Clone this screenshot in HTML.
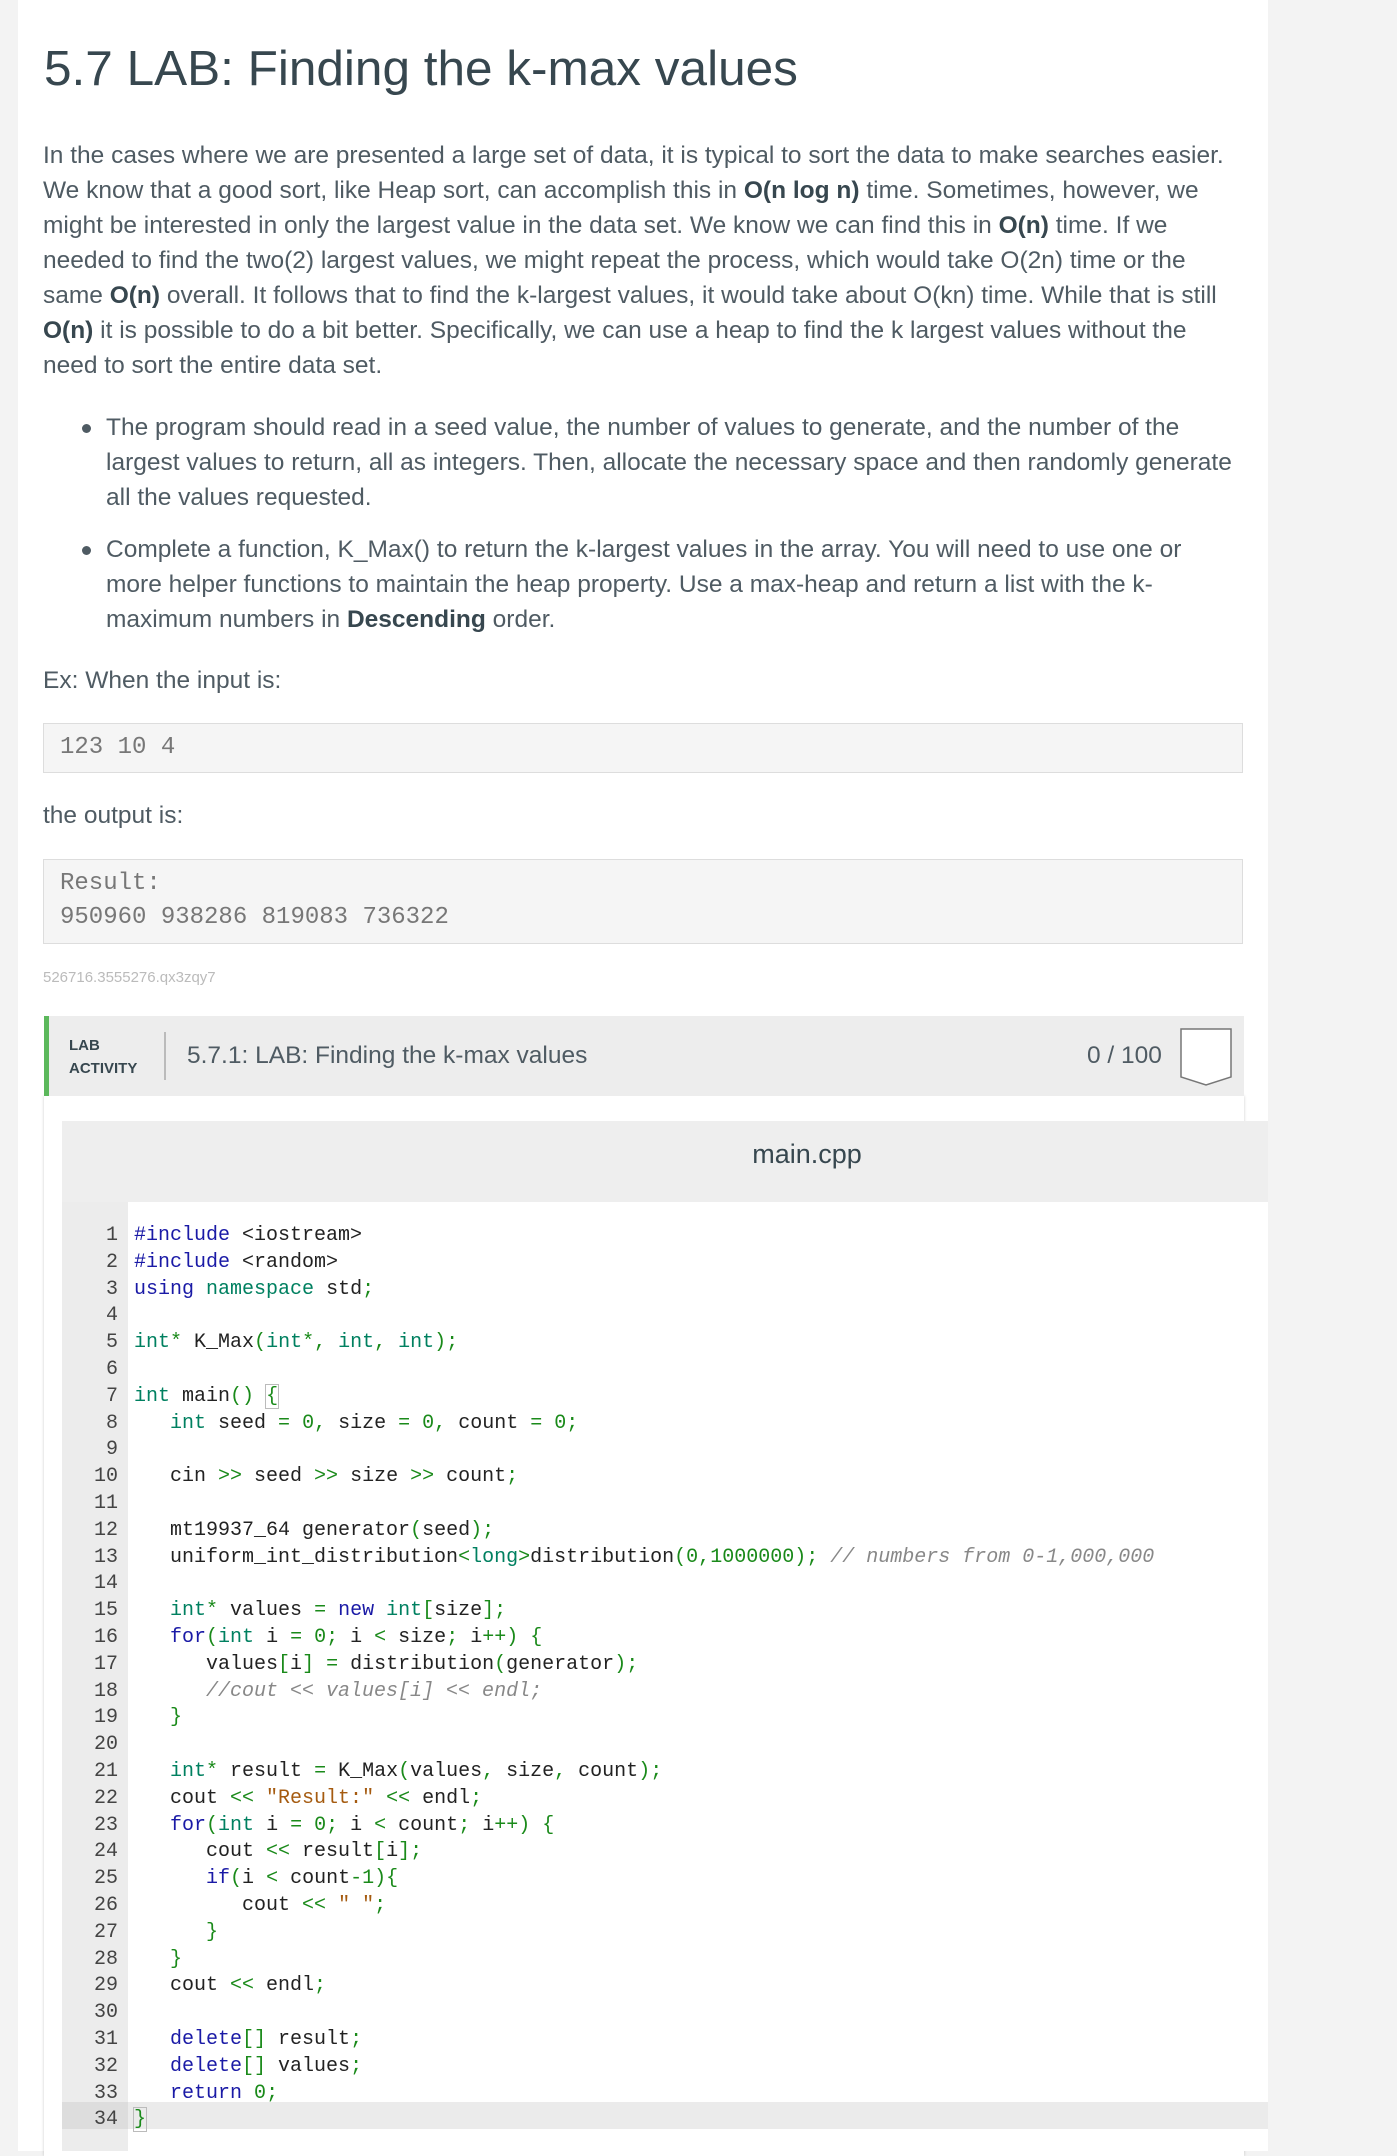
<!DOCTYPE html>
<html><head><meta charset="utf-8"><style>
*{margin:0;padding:0;box-sizing:border-box}
body{width:1397px;height:2151px;background:#f3f3f3;position:relative;overflow:hidden;font-family:"Liberation Sans",sans-serif;color:#4f5b63}
.a{position:absolute;white-space:nowrap}
#page{position:absolute;left:18px;top:0;width:1250px;height:2151px;background:#fff}
h1{position:absolute;left:44px;top:40px;font-size:49.5px;font-weight:normal;color:#37474f;white-space:nowrap}
.p{position:absolute;left:43px;font-size:24.5px;line-height:35px;white-space:nowrap}
b{color:#37474f}
.dot{position:absolute;width:9px;height:9px;border-radius:50%;background:#4f5b63}
.box{position:absolute;left:43px;width:1200px;background:#f5f5f5;border:1px solid #ddd;font-family:"Liberation Mono",monospace;font-size:24px;color:#777;padding-left:16px}
.code{position:absolute;left:0;font-family:"Liberation Mono",monospace;font-size:20px;line-height:26.8px;white-space:pre;color:#222}
.ln{position:absolute;left:62px;width:56px;text-align:right;font-family:"Liberation Mono",monospace;font-size:20px;line-height:26.8px;color:#444}
.k{color:#1a1aa6}.t{color:#008060}.o{color:#1a8a1a}.n{color:#1a8a1a}.s{color:#a55b10}.c{color:#888;font-style:italic}
</style></head><body>
<div id="page"></div>
<h1>5.7 LAB: Finding the k-max values</h1>
<div class="p" style="top:138px">In the cases where we are presented a large set of data, it is typical to sort the data to make searches easier.<br>We know that a good sort, like Heap sort, can accomplish this in <b>O(n log n)</b> time. Sometimes, however, we<br>might be interested in only the largest value in the data set. We know we can find this in <b>O(n)</b> time. If we<br>needed to find the two(2) largest values, we might repeat the process, which would take O(2n) time or the<br>same <b>O(n)</b> overall. It follows that to find the k-largest values, it would take about O(kn) time. While that is still<br><b>O(n)</b> it is possible to do a bit better. Specifically, we can use a heap to find the k largest values without the<br>need to sort the entire data set.</div>
<div class="dot" style="left:82px;top:424px"></div>
<div class="p" style="left:106px;top:410px">The program should read in a seed value, the number of values to generate, and the number of the<br>largest values to return, all as integers. Then, allocate the necessary space and then randomly generate<br>all the values requested.</div>
<div class="dot" style="left:82px;top:546px"></div>
<div class="p" style="left:106px;top:532px">Complete a function, K_Max() to return the k-largest values in the array. You will need to use one or<br>more helper functions to maintain the heap property. Use a max-heap and return a list with the k-<br>maximum numbers in <b>Descending</b> order.</div>
<div class="p" style="top:663px">Ex: When the input is:</div>
<div class="box" style="top:723px;height:50px;line-height:48px">123 10 4</div>
<div class="p" style="top:798px">the output is:</div>
<div class="box" style="top:859px;height:85px;line-height:34px;padding-top:7px">Result:<br>950960 938286 819083 736322</div>
<div class="a" style="left:43px;top:969px;font-size:15px;color:#bbb">526716.3555276.qx3zqy7</div>

<div class="a" style="left:44px;top:1096px;width:1200px;height:1060px;background:#fff;box-shadow:0 0 3px rgba(0,0,0,.2)"></div>
<div class="a" style="left:44px;top:1016px;width:1200px;height:80px;background:#ededed;border-left:5px solid #5cb85c"></div>
<div class="a" style="left:69px;top:1034px;font-size:15px;font-weight:bold;color:#37474f;line-height:23px">LAB<br>ACTIVITY</div>
<div class="a" style="left:164px;top:1032px;width:2px;height:48px;background:#bbb"></div>
<div class="a" style="left:187px;top:1042px;font-size:24.5px;color:#4f5b63">5.7.1: LAB: Finding the k-max values</div>
<div class="a" style="left:1087px;top:1042px;font-size:24.5px;color:#4f5b63">0 / 100</div>
<svg class="a" style="left:1179px;top:1027px" width="54" height="60"><path d="M2 2H52V50L27 58L2 50Z" fill="#fff" stroke="#777" stroke-width="1.5"/></svg>

<div class="a" style="left:62px;top:1121px;width:1206px;height:81px;background:#eee"></div>
<div class="a" style="left:62px;top:1139px;width:1490px;text-align:center;font-size:27px;color:#37474f">main.cpp</div>
<div class="a" style="left:62px;top:1202px;width:66px;height:949px;background:#ececec"></div>
<div class="a" style="left:128px;top:1202px;width:1140px;height:949px;background:#fff"></div>
<div class="a" style="left:62px;top:2102px;width:66px;height:27px;background:#ddd"></div>
<div class="a" style="left:128px;top:2102px;width:1140px;height:27px;background:#ebebeb"></div>

<div class="ln" style="top:1223px">1<br>2<br>3<br>4<br>5<br>6<br>7<br>8<br>9<br>10<br>11<br>12<br>13<br>14<br>15<br>16<br>17<br>18<br>19<br>20<br>21<br>22<br>23<br>24<br>25<br>26<br>27<br>28<br>29<br>30<br>31<br>32<br>33<br>34</div>
<div class="code" style="left:134px;top:1223px"><span class="k">#include</span> &lt;iostream&gt;
<span class="k">#include</span> &lt;random&gt;
<span class="k">using</span> <span class="t">namespace</span> std<span class="o">;</span>

<span class="t">int</span><span class="o">*</span> K_Max<span class="o">(</span><span class="t">int</span><span class="o">*,</span> <span class="t">int</span><span class="o">,</span> <span class="t">int</span><span class="o">);</span>

<span class="t">int</span> main<span class="o">()</span> <span class="o" style="outline:1px solid #bbb">{</span>
   <span class="t">int</span> seed <span class="o">=</span> <span class="n">0</span><span class="o">,</span> size <span class="o">=</span> <span class="n">0</span><span class="o">,</span> count <span class="o">=</span> <span class="n">0</span><span class="o">;</span>

   cin <span class="o">&gt;&gt;</span> seed <span class="o">&gt;&gt;</span> size <span class="o">&gt;&gt;</span> count<span class="o">;</span>

   mt19937_64 generator<span class="o">(</span>seed<span class="o">);</span>
   uniform_int_distribution<span class="o">&lt;</span><span class="t">long</span><span class="o">&gt;</span>distribution<span class="o">(</span><span class="n">0</span><span class="o">,</span><span class="n">1000000</span><span class="o">);</span> <span class="c">// numbers from 0-1,000,000</span>

   <span class="t">int</span><span class="o">*</span> values <span class="o">=</span> <span class="k">new</span> <span class="t">int</span><span class="o">[</span>size<span class="o">];</span>
   <span class="k">for</span><span class="o">(</span><span class="t">int</span> i <span class="o">=</span> <span class="n">0</span><span class="o">;</span> i <span class="o">&lt;</span> size<span class="o">;</span> i<span class="o">++)</span> <span class="o">{</span>
      values<span class="o">[</span>i<span class="o">]</span> <span class="o">=</span> distribution<span class="o">(</span>generator<span class="o">);</span>
      <span class="c">//cout &lt;&lt; values[i] &lt;&lt; endl;</span>
   <span class="o">}</span>

   <span class="t">int</span><span class="o">*</span> result <span class="o">=</span> K_Max<span class="o">(</span>values<span class="o">,</span> size<span class="o">,</span> count<span class="o">);</span>
   cout <span class="o">&lt;&lt;</span> <span class="s">"Result:"</span> <span class="o">&lt;&lt;</span> endl<span class="o">;</span>
   <span class="k">for</span><span class="o">(</span><span class="t">int</span> i <span class="o">=</span> <span class="n">0</span><span class="o">;</span> i <span class="o">&lt;</span> count<span class="o">;</span> i<span class="o">++)</span> <span class="o">{</span>
      cout <span class="o">&lt;&lt;</span> result<span class="o">[</span>i<span class="o">];</span>
      <span class="k">if</span><span class="o">(</span>i <span class="o">&lt;</span> count<span class="o">-</span><span class="n">1</span><span class="o">){</span>
         cout <span class="o">&lt;&lt;</span> <span class="s">" "</span><span class="o">;</span>
      <span class="o">}</span>
   <span class="o">}</span>
   cout <span class="o">&lt;&lt;</span> endl<span class="o">;</span>

   <span class="k">delete</span><span class="o">[]</span> result<span class="o">;</span>
   <span class="k">delete</span><span class="o">[]</span> values<span class="o">;</span>
   <span class="k">return</span> <span class="n">0</span><span class="o">;</span>
<span class="o" style="outline:1px solid #bbb">}</span></div>
</body></html>
